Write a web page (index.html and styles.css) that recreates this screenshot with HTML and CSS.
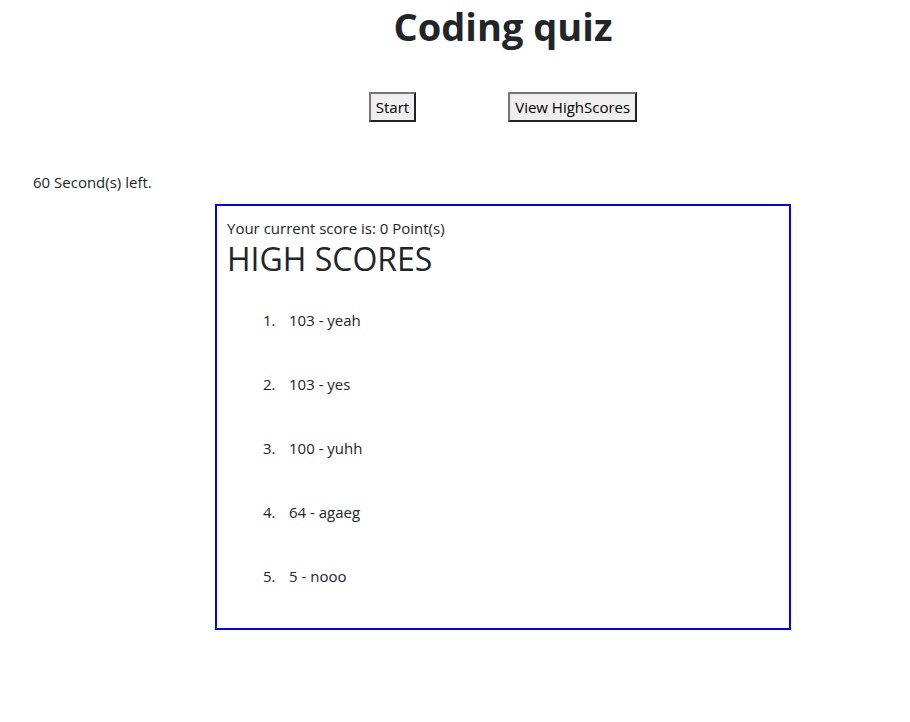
FILE: index.html
```html
<!DOCTYPE html>
<html lang="en">
<head>
<meta charset="utf-8">
<title>Coding quiz</title>
<link rel="stylesheet" href="styles.css">
</head>
<body>
<div class="page">
  <h1 class="title">Coding quiz</h1>
  <div class="controls">
    <button class="btn" type="button">Start</button>
    <button class="btn" type="button">View HighScores</button>
  </div>
</div>
<p class="timer">60 Second(s) left.</p>
<div class="page">
  <section class="board">
    <p class="score">Your current score is: 0 Point(s)</p>
    <h2 class="board-title">HIGH SCORES</h2>
    <ol class="scores">
      <li><span class="rank">1.</span>103 - yeah</li>
      <li><span class="rank">2.</span>103 - yes</li>
      <li><span class="rank">3.</span>100 - yuhh</li>
      <li><span class="rank">4.</span>64 - agaeg</li>
      <li><span class="rank">5.</span>5 - nooo</li>
    </ol>
  </section>
</div>
</body>
</html>
```
FILE: styles.css
```css
* { box-sizing: border-box; }
body {
  margin: 0;
  font-family: "Open Sans", "Noto Sans", sans-serif;
  font-size: 15px;
  line-height: 24px;
  color: #212529;
  background: #fff;
}
.page {
  padding-left: 96px;
}
.title {
  margin: 0;
  text-align: center;
  font-size: 38px;
  line-height: 52px;
  font-weight: 700;
}
.controls {
  display: flex;
  justify-content: center;
  margin-top: 40px;
}
.btn {
  margin: 0 46px;
  font-family: inherit;
  font-size: 15px;
  line-height: 24px;
  padding: 1px 5px;
  color: #000;
  background: #efefef;
  border: 2px outset #767676;
  border-radius: 0;
}
.timer {
  margin: 48px 0 10px 33px;
}
.board {
  width: 576px;
  margin: 0 auto;
  border: 2px solid #0000ff;
  padding: 10px 10px 20px;
}
.score {
  margin: 0;
}
.board-title {
  margin: 0 0 10px;
  font-size: 32px;
  line-height: 38px;
  font-weight: 400;
}
.scores {
  list-style: none;
  margin: 0;
  padding: 0 0 0 36px;
}
.scores li {
  padding: 20px 0;
}
.rank {
  display: inline-block;
  width: 26px;
}
```
